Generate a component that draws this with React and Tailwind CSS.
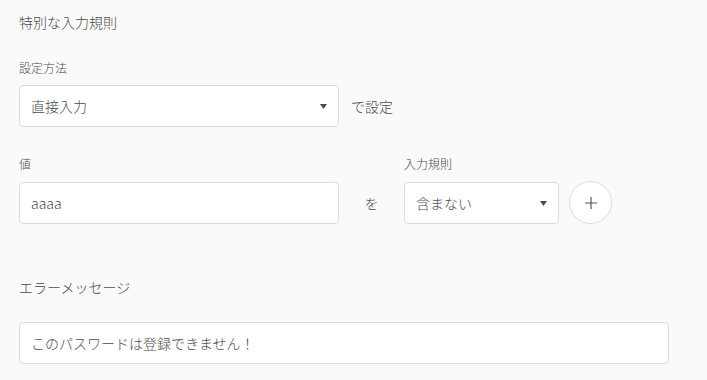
const font = { fontFamily: '"Noto Sans CJK JP", "Noto Sans", sans-serif' };

function Caret() {
  return (
    <svg width="7" height="5" viewBox="0 0 7 5" className="shrink-0">
      <path d="M0 0h7L3.5 5z" fill="#4b4b4b" />
    </svg>
  );
}

function SelectBox({ value, className }) {
  return (
    <div
      className={`flex h-[42px] items-center justify-between rounded-[4px] border border-[#d9dde4] bg-white pl-[11px] pr-[11px] ${className}`}
    >
      <span className="text-[14px] leading-[20px] font-light text-[#4a4a4a]">{value}</span>
      <Caret />
    </div>
  );
}

function TextBox({ value, className }) {
  return (
    <div
      className={`flex h-[42px] items-center rounded-[4px] border border-[#d9dde4] bg-white px-[11px] ${className}`}
    >
      <span className="text-[14px] leading-[20px] font-light text-[#4a4a4a]">{value}</span>
    </div>
  );
}

export default function App() {
  return (
    <div className="h-[380px] w-full bg-[#fafafa] px-[19px] pt-[12px] font-light" style={font}>
      <h2 className="text-[14px] leading-[20px] text-[#4a4a4a]">特別な入力規則</h2>

      <div className="mt-[28px]">
        <div className="text-[12px] leading-[16px] text-[#4a4a4a]">設定方法</div>
        <div className="mt-[9px] flex items-center">
          <SelectBox value="直接入力" className="w-[320px]" />
          <span className="ml-[12px] text-[14px] leading-[20px] text-[#4a4a4a]">で設定</span>
        </div>
      </div>

      <div className="mt-[29px] flex items-end">
        <div className="w-[320px]">
          <div className="text-[12px] leading-[16px] text-[#4a4a4a]">値</div>
          <TextBox value="aaaa" className="mt-[10px] w-full" />
        </div>
        <div className="flex h-[42px] w-[65px] items-center justify-center text-[14px] leading-[20px] text-[#4a4a4a]">
          を
        </div>
        <div className="w-[155px]">
          <div className="text-[12px] leading-[16px] text-[#4a4a4a]">入力規則</div>
          <SelectBox value="含まない" className="mt-[10px] w-full" />
        </div>
        <button className="ml-[10px] flex h-[43px] w-[43px] items-center justify-center rounded-full border border-[#d9dde4] bg-white">
          <svg width="12" height="12" viewBox="0 0 12 12">
            <path d="M6 0v12M0 6h12" stroke="#555" strokeWidth="1.2" />
          </svg>
        </button>
      </div>

      <div className="mt-[53px] text-[14px] leading-[20px] text-[#4a4a4a]">エラーメッセージ</div>
      <TextBox value="このパスワードは登録できません！" className="mt-[25px] w-[650px]" />
    </div>
  );
}
